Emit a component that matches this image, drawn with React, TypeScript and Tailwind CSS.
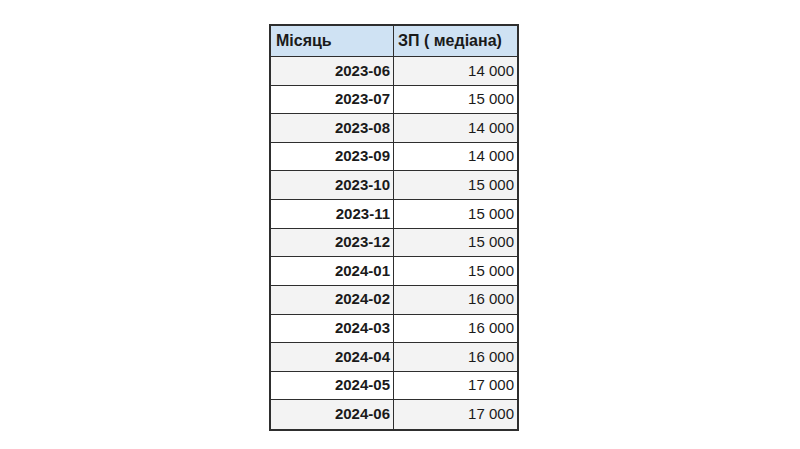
import React from "react";

const rows: [string, string][] = [
  ["2023-06", "14 000"],
  ["2023-07", "15 000"],
  ["2023-08", "14 000"],
  ["2023-09", "14 000"],
  ["2023-10", "15 000"],
  ["2023-11", "15 000"],
  ["2023-12", "15 000"],
  ["2024-01", "15 000"],
  ["2024-02", "16 000"],
  ["2024-03", "16 000"],
  ["2024-04", "16 000"],
  ["2024-05", "17 000"],
  ["2024-06", "17 000"],
];

export default function App() {
  return (
    <div className="w-[800px] h-[449px] bg-white pt-[24px]" style={{ fontFamily: '"Liberation Sans", Arial, sans-serif' }}>
      <div className="ml-[269px] w-[250px] h-[407px] grid grid-cols-[123px_1fr] grid-rows-[31px_repeat(13,1fr)] border-2 border-[#2e2e2e] text-[15px] text-[#1a1a1a]">
        <div className="bg-[#cfe2f3] border-r border-b border-[#2e2e2e] font-bold text-[16px] flex items-center pl-[5px]">Місяць</div>
        <div className="bg-[#cfe2f3] border-b border-[#2e2e2e] font-bold text-[16px] flex items-center pl-[4px]">ЗП ( медіана)</div>
        {rows.map(([d, v], i) => {
          const bg = i % 2 === 0 ? "bg-[#f3f3f3]" : "bg-white";
          const last = i === rows.length - 1;
          return (
            <React.Fragment key={d}>
              <div className={`${bg} border-r ${last ? "" : "border-b"} border-[#2e2e2e] font-bold flex items-center justify-end pr-[3px]`}>{d}</div>
              <div className={`${bg} ${last ? "" : "border-b"} border-[#2e2e2e] flex items-center justify-end pr-[3px]`}>{v}</div>
            </React.Fragment>
          );
        })}
      </div>
    </div>
  );
}
